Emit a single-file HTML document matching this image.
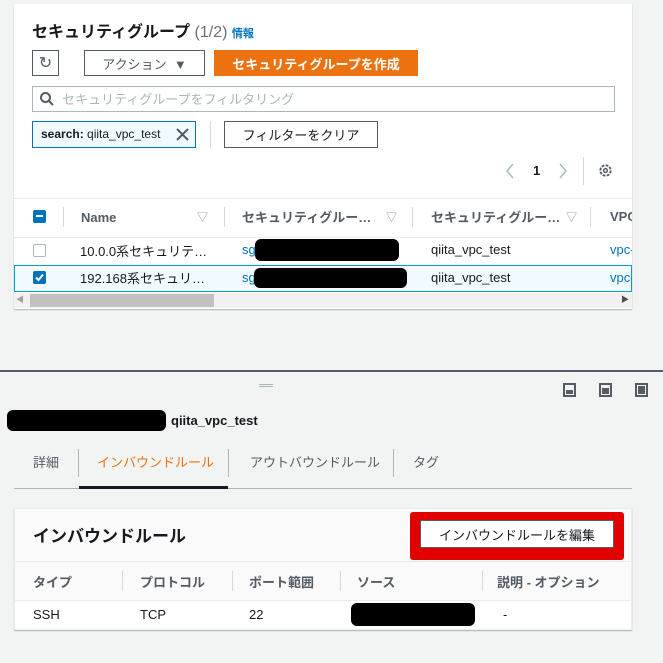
<!DOCTYPE html>
<html><head><meta charset="utf-8"><style>
*{box-sizing:border-box;margin:0;padding:0}
body{width:663px;height:663px;background:#f2f3f3;font-family:"Liberation Sans","Noto Sans CJK JP",sans-serif;color:#16191f;position:relative;overflow:hidden;font-size:13px}
.a{position:absolute;white-space:nowrap}
.btn{position:absolute;border:1px solid #545b64;background:#fff;display:flex;align-items:center;justify-content:center;font-size:13px;color:#545b64}
.blk{position:absolute;background:#000;border-radius:6px}
.hd{font-weight:bold;color:#545b64}
.sep{position:absolute;width:1px;background:#d5dbdb}
</style></head><body>
<div class="a" style="left:14px;top:4px;width:618px;height:305px;background:#fff;box-shadow:0 1px 1px #aab7b8"></div>
<div class="a" style="left:32px;top:18px;font-size:16px;font-weight:bold">セキュリティグループ <span style="font-weight:normal;color:#687078">(1/2)</span> <span style="font-size:11px;color:#0073bb;font-weight:bold">情報</span></div>
<div class="btn" style="left:32px;top:50px;width:27px;height:26px;font-size:16px;color:#545b64">↻</div>
<div class="btn" style="left:84px;top:50px;width:121px;height:26px">アクション&nbsp;&nbsp;▼</div>
<div class="btn" style="left:214px;top:50px;width:204px;height:26px;background:#ec7211;border-color:#ec7211;color:#fff;font-weight:bold">セキュリティグループを作成</div>
<div class="a" style="left:32px;top:86px;width:583px;height:26px;border:1px solid #aab7b8;background:#fff"></div>
<svg class="a" style="left:39px;top:91px" width="16" height="16" viewBox="0 0 16 16"><circle cx="6.5" cy="6.5" r="4.5" fill="none" stroke="#545b64" stroke-width="2"/><path d="M10 10l4 4" stroke="#545b64" stroke-width="2"/></svg>
<div class="a" style="left:62px;top:89px;font-size:13px;color:#aab7b8">セキュリティグループをフィルタリング</div>
<div class="a" style="left:32px;top:121px;width:164px;height:27px;border:1px solid #0073bb;background:#f1faff"></div>
<div class="a" style="left:41px;top:127px;font-size:12px"><b>search:</b> qiita_vpc_test</div>
<svg class="a" style="left:176px;top:128px" width="13" height="13" viewBox="0 0 13 13"><path d="M1 1L12 12M12 1L1 12" stroke="#545b64" stroke-width="2"/></svg>
<div class="sep" style="left:210px;top:121px;height:27px"></div>
<div class="btn" style="left:224px;top:121px;width:154px;height:27px;color:#16191f">フィルターをクリア</div>
<svg class="a" style="left:505px;top:163px" width="10" height="16" viewBox="0 0 10 16"><path d="M8 1L2 8l6 7" fill="none" stroke="#aab7b8" stroke-width="1.5"/></svg>
<div class="a" style="left:533px;top:163px;font-weight:bold">1</div>
<svg class="a" style="left:558px;top:163px" width="10" height="16" viewBox="0 0 10 16"><path d="M2 1l6 7-6 7" fill="none" stroke="#aab7b8" stroke-width="1.5"/></svg>
<div class="sep" style="left:583px;top:157px;height:28px"></div>
<svg class="a" style="left:598px;top:163px" width="15" height="15" viewBox="0 0 16 16"><circle cx="8" cy="8" r="5.5" fill="none" stroke="#545b64" stroke-width="2" stroke-dasharray="3 1.3"/><circle cx="8" cy="8" r="2" fill="none" stroke="#545b64" stroke-width="1.5"/></svg>
<div class="a" style="left:14px;top:198px;width:618px;height:1px;background:#eaeded"></div>
<div class="a" style="left:33px;top:210px;width:13px;height:13px;background:#0073bb;border-radius:2px"><div style="position:absolute;left:3px;top:5px;width:7px;height:2px;background:#fff"></div></div>
<div class="sep" style="left:63px;top:207px;height:20px"></div>
<div class="a hd" style="left:81px;top:210px">Name</div>
<div class="a" style="left:197px;top:209px;color:#879596;font-size:11px">▽</div>
<div class="sep" style="left:224px;top:207px;height:20px"></div>
<div class="a hd" style="left:242px;top:207px">セキュリティグルー…</div>
<div class="a" style="left:386px;top:209px;color:#879596;font-size:11px">▽</div>
<div class="sep" style="left:412px;top:207px;height:20px"></div>
<div class="a hd" style="left:431px;top:207px">セキュリティグルー…</div>
<div class="a" style="left:566px;top:209px;color:#879596;font-size:11px">▽</div>
<div class="sep" style="left:590px;top:207px;height:20px"></div>
<div class="a hd" style="left:610px;top:209px;width:22px;overflow:hidden">VPC</div>
<div class="a" style="left:14px;top:237px;width:618px;height:1px;background:#eaeded"></div>
<div class="a" style="left:33px;top:244px;width:13px;height:13px;border:1px solid #aab7b8;border-radius:2px;background:#fff"></div>
<div class="a" style="left:80px;top:241px">10.0.0系セキュリテ…</div>
<div class="a" style="left:242px;top:242px;color:#0073bb">sg</div>
<div class="blk" style="left:255px;top:239px;width:144px;height:22px"></div>
<div class="a" style="left:431px;top:242px">qiita_vpc_test</div>
<div class="a" style="left:610px;top:242px;color:#0073bb;width:22px;overflow:hidden">vpc-</div>
<div class="a" style="left:14px;top:265px;width:618px;height:27px;background:#f1faff;border:1px solid #00a1c9"></div>
<div class="a" style="left:33px;top:271px;width:13px;height:13px;background:#0073bb;border-radius:2px"><svg style="position:absolute;left:1px;top:1px" width="11" height="11" viewBox="0 0 11 11"><path d="M2 5.5l2.5 2.5L9 2.5" fill="none" stroke="#fff" stroke-width="2"/></svg></div>
<div class="a" style="left:80px;top:268px">192.168系セキュリ…</div>
<div class="a" style="left:242px;top:270px;color:#0073bb">sg</div>
<div class="blk" style="left:254px;top:268px;width:153px;height:20px"></div>
<div class="a" style="left:431px;top:270px">qiita_vpc_test</div>
<div class="a" style="left:610px;top:270px;color:#0073bb;width:22px;overflow:hidden">vpc-</div>
<div class="a" style="left:14px;top:293px;width:618px;height:15px;background:#f1f1f1"></div>
<div class="a" style="left:30px;top:294px;width:184px;height:13px;background:#c1c1c1"></div>
<div class="a" style="left:16px;top:294px;font-size:8px;color:#a3a3a3">◀</div>
<div class="a" style="left:621px;top:294px;font-size:8px;color:#505050">▶</div>
<div class="a" style="left:0;top:370px;width:663px;height:2px;background:#545b64"></div>
<div class="a" style="left:259px;top:384px;width:14px;height:1px;background:#aab7b8;box-shadow:0 2px 0 #aab7b8"></div>
<div class="a" style="left:563px;top:383px;width:13px;height:14px;border:2px solid #545b64"><div style="position:absolute;left:1px;right:1px;bottom:1px;height:4px;background:#545b64"></div></div>
<div class="a" style="left:599px;top:383px;width:13px;height:14px;border:2px solid #545b64"><div style="position:absolute;left:1px;right:1px;bottom:1px;top:3px;background:#545b64"></div></div>
<div class="a" style="left:635px;top:383px;width:13px;height:14px;border:2px solid #545b64"><div style="position:absolute;left:1px;right:1px;bottom:1px;top:1px;background:#545b64"></div></div>
<div class="blk" style="left:7px;top:410px;width:159px;height:21px"></div>
<div class="a" style="left:171px;top:413px;font-weight:bold;font-size:13px">qiita_vpc_test</div>
<div class="a" style="left:33px;top:452px;color:#545b64;font-size:13px">詳細</div>
<div class="sep" style="left:78px;top:449px;height:28px;background:#aab7b8"></div>
<div class="a" style="left:97px;top:452px;color:#ec7211;font-size:13px">インバウンドルール</div>
<div class="sep" style="left:228px;top:449px;height:28px;background:#aab7b8"></div>
<div class="a" style="left:250px;top:452px;color:#545b64;font-size:13px">アウトバウンドルール</div>
<div class="sep" style="left:393px;top:449px;height:28px;background:#aab7b8"></div>
<div class="a" style="left:413px;top:452px;color:#545b64;font-size:13px">タグ</div>
<div class="a" style="left:14px;top:488px;width:618px;height:1px;background:#aab7b8"></div>
<div class="a" style="left:79px;top:486px;width:149px;height:3px;background:#16191f"></div>
<div class="a" style="left:14px;top:508px;width:618px;height:122px;background:#fff;box-shadow:0 1px 1px #aab7b8;border:1px solid #eaeded"></div>
<div class="a" style="left:15px;top:509px;width:616px;height:53px;background:#fafafa;border-bottom:1px solid #eaeded"></div>
<div class="a" style="left:33px;top:522px;font-size:17px;font-weight:bold">インバウンドルール</div>
<div class="a" style="left:410px;top:512px;width:214px;height:48px;background:#e00000;border-radius:3px"></div>
<div class="btn" style="left:420px;top:520px;width:194px;height:28px;color:#16191f">インバウンドルールを編集</div>
<div class="a" style="left:15px;top:562px;width:616px;height:39px;background:#fafafa;border-bottom:1px solid #eaeded"></div>
<div class="a hd" style="left:33px;top:572px">タイプ</div>
<div class="sep" style="left:122px;top:571px;height:20px"></div>
<div class="a hd" style="left:140px;top:572px">プロトコル</div>
<div class="sep" style="left:232px;top:571px;height:20px"></div>
<div class="a hd" style="left:249px;top:572px">ポート範囲</div>
<div class="sep" style="left:340px;top:571px;height:20px"></div>
<div class="a hd" style="left:357px;top:572px">ソース</div>
<div class="sep" style="left:482px;top:571px;height:20px"></div>
<div class="a hd" style="left:497px;top:572px">説明 - オプション</div>
<div class="a" style="left:33px;top:607px">SSH</div>
<div class="a" style="left:140px;top:607px">TCP</div>
<div class="a" style="left:249px;top:607px">22</div>
<div class="blk" style="left:351px;top:603px;width:124px;height:23px"></div>
<div class="a" style="left:503px;top:607px">-</div>
</body></html>
